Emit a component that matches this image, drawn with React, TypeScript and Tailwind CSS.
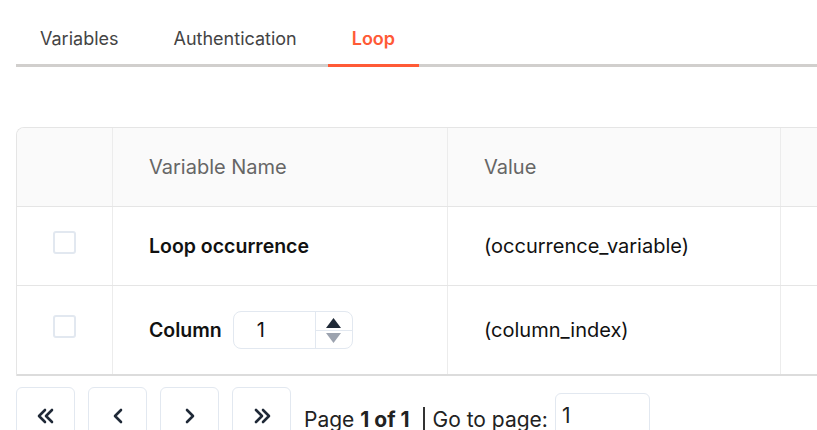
import React from "react";

const tabs = ["Variables", "Authentication", "Loop"];

const Checkbox = () => (
  <div className="w-[23px] h-[23px] rounded-[3px] border-2 border-[#e2e8f0] bg-white" />
);

const NumberInput = () => (
  <div className="flex items-stretch w-[120px] h-[38px] rounded-lg border border-[#e2e8f0] bg-white">
    <div className="flex-1 flex items-center pl-[23px] text-[20px] font-normal text-[#111]">1</div>
    <div className="w-[37px] border-l border-[#e2e8f0] flex flex-col">
      <div className="flex-1 flex items-end justify-center pb-[2px] border-b border-[#e2e8f0]">
        <svg width="15" height="10" viewBox="0 0 15 10">
          <path d="M7.5 0 L15 10 L0 10 Z" fill="#1f2937" />
        </svg>
      </div>
      <div className="flex-1 flex items-start justify-center pt-[2px]">
        <svg width="15" height="10" viewBox="0 0 15 10">
          <path d="M0 0 L15 0 L7.5 10 Z" fill="#9ca3af" />
        </svg>
      </div>
    </div>
  </div>
);

const Chevron = ({ dir, double }: { dir: "left" | "right"; double?: boolean }) => (
  <svg width="20" height="18" viewBox="0 0 20 18" fill="none" stroke="#1f2937" strokeWidth="2.6" strokeLinecap="round" strokeLinejoin="round">
    {double ? (
      <>
        <path d={dir === "left" ? "M9 3 L3 9 L9 15" : "M4 3 L10 9 L4 15"} />
        <path d={dir === "left" ? "M16 3 L10 9 L16 15" : "M11 3 L17 9 L11 15"} />
      </>
    ) : (
      <path d={dir === "left" ? "M13 3 L7 9 L13 15" : "M7 3 L13 9 L7 15"} />
    )}
  </svg>
);

const PageButton = ({ children }: { children: React.ReactNode }) => (
  <button className="w-[59px] h-[56px] rounded-md border border-[#e2e8f0] bg-white flex items-center justify-center pt-[2px]">
    {children}
  </button>
);

export default function App() {
  return (
    <div className="w-[817px] h-[430px] overflow-hidden bg-white font-['Inter',sans-serif] pl-4">
      <div className="flex gap-[7px] border-b-[3px] border-[#d1cfcd] pt-[25px] w-[900px]">
        {tabs.map((t) => (
          <div
            key={t}
            className={
              t === "Loop"
                ? "px-6 pb-[11px] -mb-[3px] border-b-[3px] border-[#ff5a36] text-[#ff5a36] font-semibold text-[18px] leading-[28px]"
                : "px-6 pb-[11px] text-[#444] text-[18px] leading-[28px]"
            }
          >
            {t}
          </div>
        ))}
      </div>

      <div className="mt-[60px] w-[900px] border-l border-t border-[#e5e5e5] rounded-tl-lg overflow-hidden">
        <div className="grid grid-cols-[96px_335px_333px_1fr] bg-[#fafafa] border-b border-[#e5e5e5]">
          <div className="border-r border-[#ececec]" />
          <div className="border-r border-[#ececec] py-[25px] pl-[36px] text-[20px] leading-[28px] text-[#666]">Variable Name</div>
          <div className="border-r border-[#ececec] py-[25px] pl-[36px] text-[20px] leading-[28px] text-[#666]">Value</div>
          <div />
        </div>
        <div className="grid grid-cols-[96px_335px_333px_1fr] border-b border-[#e5e5e5]">
          <div className="border-r border-[#ececec] flex justify-center pt-[24px]">
            <Checkbox />
          </div>
          <div className="border-r border-[#ececec] py-[25px] pl-[36px] text-[19.5px] leading-[28px] font-semibold text-[#111]">Loop occurrence</div>
          <div className="border-r border-[#ececec] py-[25px] pl-[36px] text-[20px] leading-[28px] text-[#111]">(occurrence_variable)</div>
          <div />
        </div>
        <div className="grid grid-cols-[96px_335px_333px_1fr] border-b-2 border-[#dcdcdc]">
          <div className="border-r border-[#ececec] flex justify-center pt-[29px]">
            <Checkbox />
          </div>
          <div className="border-r border-[#ececec] py-[25px] pl-[36px] flex items-center gap-[11px] text-[19.5px] leading-[28px] font-semibold text-[#111]">
            Column
            <NumberInput />
          </div>
          <div className="border-r border-[#ececec] py-[25px] pl-[36px] flex items-center text-[20px] leading-[28px] text-[#111]">(column_index)</div>
          <div />
        </div>
      </div>

      <div className="mt-[11px] flex items-start gap-[13px]">
        <PageButton><Chevron dir="left" double /></PageButton>
        <PageButton><Chevron dir="left" /></PageButton>
        <PageButton><Chevron dir="right" /></PageButton>
        <PageButton><Chevron dir="right" double /></PageButton>
        <div className="flex items-center pt-[12px] text-[21px] leading-[28px] text-[#222]">
          <span>Page <b className="font-bold">1 of 1</b></span>
          <span className="ml-[13px] mr-[8px] w-[2px] h-[26px] bg-[#333]" />
          <span>Go to page:</span>
          <div className="ml-[7px] -mt-[6px] w-[95px] h-[48px] rounded-md border border-[#e2e8f0] flex items-start pl-[6px] pt-[8px]">1</div>
        </div>
      </div>
    </div>
  );
}
